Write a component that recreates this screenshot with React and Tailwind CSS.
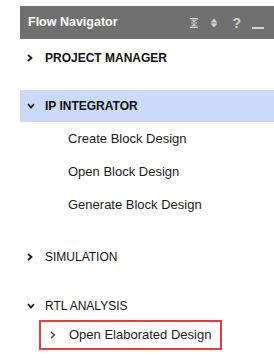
import React from "react";

// small chevron glyphs drawn as svg
function Chevron({ dir = "right", thin = false }) {
    const stroke = thin ? "#333" : "#1a1a1a";
    const w = thin ? 1.2 : 1.8;
    if (dir === "down") {
        return (
            <svg width="8" height="6" viewBox="0 0 8 6" className="block">
                <polyline points="1,1 4,4.5 7,1" fill="none" stroke={stroke} strokeWidth={w} />
            </svg>
        );
    }
    return (
        <svg width="6" height="8" viewBox="0 0 6 8" className="block">
            <polyline points="1,1 4.5,4 1,7" fill="none" stroke={stroke} strokeWidth={w} />
        </svg>
    );
}

function Section({ label, open, bold, highlight, className = "" }) {
    return (
        <div
            className={`flex items-center pl-[7px] ${highlight ? "bg-[#c9dbf8]" : ""} ${className}`}
        >
            <div className="w-[18px] flex items-center">
                <Chevron dir={open ? "down" : "right"} />
            </div>
            <span className={`text-[12px] text-[#111] ${bold ? "font-bold" : ""}`}>{label}</span>
        </div>
    );
}

function SubItem({ label }) {
    return (
        <div className="h-[33px] flex items-center pl-[48px] text-[13px] text-[#1c1c1c]">
            {label}
        </div>
    );
}

export default function App() {
    return (
        <div
            className="w-[274px] h-[358px] bg-white pl-[20px] pt-[6px] overflow-hidden"
            style={{ fontFamily: '"Liberation Sans", Arial, sans-serif' }}
        >
            {/* Header bar */}
            <div className="h-[33px] bg-[#707070] flex items-center pl-[8px] pr-[10px]">
                <span className="text-white font-bold text-[12.5px]">Flow Navigator</span>
                <div className="ml-auto flex items-center text-[#d2d2d2]">
                    {/* collapse all */}
                    <svg width="8" height="10" viewBox="0 0 8 10" className="block">
                        <rect x="0" y="0" width="8" height="1.4" fill="#d2d2d2" />
                        <polygon points="1,2.2 7,2.2 4,4.3" fill="#d2d2d2" />
                        <rect x="1" y="4.6" width="6" height="0.9" fill="#d2d2d2" />
                        <polygon points="1,7.8 7,7.8 4,5.7" fill="#d2d2d2" />
                        <rect x="0" y="8.6" width="8" height="1.4" fill="#d2d2d2" />
                    </svg>
                    {/* expand all */}
                    <svg width="8" height="10" viewBox="0 0 8 10" className="block ml-[12px]">
                        <polygon points="0.8,4.2 7.2,4.2 4,0.5" fill="#d2d2d2" />
                        <rect x="1" y="4.6" width="6" height="0.9" fill="#d2d2d2" />
                        <polygon points="0.8,5.8 7.2,5.8 4,9.5" fill="#d2d2d2" />
                    </svg>
                    <span className="ml-[14px] font-bold text-[14px] leading-none">?</span>
                    <span className="ml-[11px] block w-[12px] h-[2px] bg-[#d2d2d2] mt-[10px]"></span>
                </div>
            </div>

            <Section label="PROJECT MANAGER" bold className="h-[32px] mt-[3px]" />

            <Section label="IP INTEGRATOR" open bold highlight className="h-[32px] mt-[16px]" />
            <SubItem label="Create Block Design" />
            <SubItem label="Open Block Design" />
            <SubItem label="Generate Block Design" />

            <Section label="SIMULATION" className="h-[32px] mt-[20px]" />

            <Section label="RTL ANALYSIS" open className="h-[26px] mt-[20px]" />
            {/* highlighted entry */}
            <div className="mt-[1px] ml-[19px] w-[183px] h-[30px] border-2 border-[#ea3a3e] flex items-center pl-[9px]">
                <div className="w-[19px] flex items-center">
                    <Chevron thin />
                </div>
                <span className="text-[13px] text-[#1c1c1c]">Open Elaborated Design</span>
            </div>
        </div>
    );
}
